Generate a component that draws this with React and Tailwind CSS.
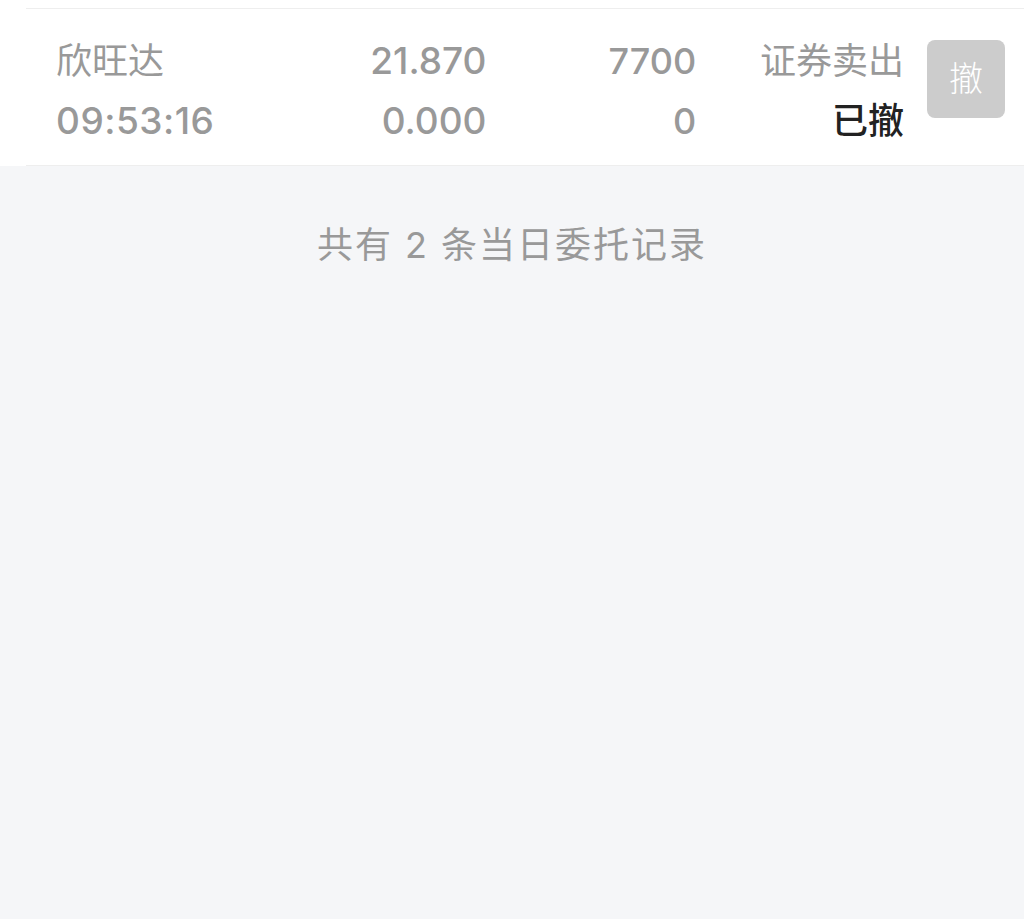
import React from 'react';

const order = {
  name: '欣旺达',
  time: '09:53:16',
  price: '21.870',
  dealPrice: '0.000',
  qty: '7700',
  dealQty: '0',
  type: '证券卖出',
  status: '已撤',
};

export default function App() {
  return (
    <div
      className="min-h-[919px] w-full bg-[#f5f6f8]"
      style={{ fontFamily: 'Inter, "Noto Sans CJK SC", sans-serif' }}
    >
      {/* Order row */}
      <div className="bg-white pt-[8px]">
        <div className="ml-[26px] flex h-[158px] border-y border-[#eeeeee] pl-[30px] pr-[19px] text-[36px] leading-[60px] text-[#999999]">
          <div className="w-[221px] pt-[22px]">
            <div>{order.name}</div>
            <div className="text-[37px] font-medium tracking-[0.5px]">{order.time}</div>
          </div>
          <div className="w-[210px] pt-[22px] text-right text-[37px] font-medium">
            <div>{order.price}</div>
            <div>{order.dealPrice}</div>
          </div>
          <div className="w-[210px] pt-[22px] text-right text-[36px] font-medium">
            <div>{order.qty}</div>
            <div>{order.dealQty}</div>
          </div>
          <div className="w-[208px] pt-[22px] text-right">
            <div>{order.type}</div>
            <div className="font-medium text-[#222222]">{order.status}</div>
          </div>
          <div className="ml-[23px] pt-[31px]">
            <button className="flex h-[78px] w-[78px] items-center justify-center rounded-[8px] bg-[#cccccc] text-[34px] font-light text-white">
              撤
            </button>
          </div>
        </div>
      </div>

      {/* Footer note */}
      <div className="pt-[54px] text-center text-[36px] leading-[50px] tracking-[2px] text-[#999999]">
        共有 2 条当日委托记录
      </div>
    </div>
  );
}
